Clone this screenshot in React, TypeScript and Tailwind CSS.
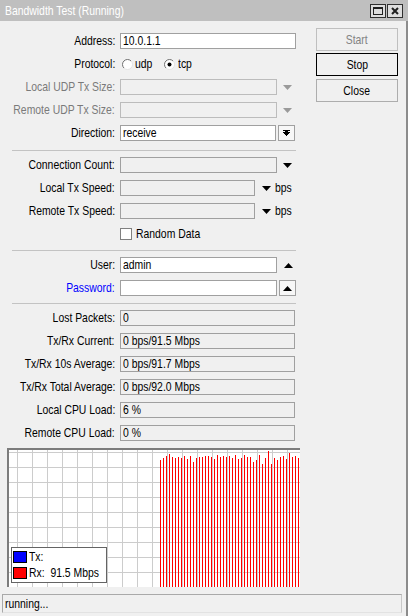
import type { ReactNode } from 'react';

const barTops = [
  10, 8, 6, 4, 7, 8, 7, 8, 6, 9, 6, 12, 8, 7, 7, 6, 6, 7, 9, 5, 7, 6, 7, 6, 8, 5, 9, 8, 5, 7, 7, 12, 10, 5, 14, 8, 1,
  14, 8, 10, 7, 6, 9, 3, 7, 6, 8,
];

// the reference font is a narrow, tall sans; squeeze Liberation Sans to match
function T({ children, origin = 'left' }: { children: ReactNode; origin?: 'left' | 'right' | 'center' }) {
  const o = origin === 'left' ? 'origin-left' : origin === 'right' ? 'origin-right' : 'origin-center';
  return <span className={`inline-block shrink-0 whitespace-pre scale-x-[0.8] ${o}`}>{children}</span>;
}

function Row({ label, labelClass = 'text-black', first, children }: { label: string; labelClass?: string; first?: boolean; children?: ReactNode }) {
  return (
    <div className={`flex h-[16px] items-center ${first ? '' : 'mt-[7px]'}`}>
      <div className={`flex w-[116px] shrink-0 justify-end pr-[1px] ${labelClass}`}>
        {label && <T origin="right">{label}</T>}
      </div>
      <div className="ml-[4px] flex h-[16px] items-center">{children}</div>
    </div>
  );
}

function Field({ value = '', width, tone = 'white' }: { value?: string; width: string; tone?: 'white' | 'gray' | 'disabled' }) {
  const cls =
    tone === 'white'
      ? 'bg-white border-[#a0a0a0]'
      : tone === 'gray'
        ? 'bg-[#f0f0f0] border-[#a0a0a0]'
        : 'bg-[#f0f0f0] border-[#bcbcbc]';
  return (
    <div className={`${width} flex h-[16px] shrink-0 items-center border pl-[2px] leading-[14px] ${cls}`}>
      {value && <T>{value}</T>}
    </div>
  );
}

function Arrow({ up, color = '#000000', className = '' }: { up?: boolean; color?: string; className?: string }) {
  return (
    <svg width="9" height="5" viewBox="0 0 9 5" className={`shrink-0 ${className}`}>
      <polygon points={up ? '0,5 9,5 4.5,0' : '0,0 9,0 4.5,5'} fill={color} />
    </svg>
  );
}

function Radio({ checked }: { checked?: boolean }) {
  return (
    <svg width="11" height="11" viewBox="0 0 11 11" className="shrink-0">
      <circle cx="5.5" cy="5.5" r="5" fill="#ffffff" />
      <path d="M1.96 9.04 A5 5 0 0 1 9.04 1.96" stroke="#707070" fill="none" />
      <path d="M9.04 1.96 A5 5 0 0 1 1.96 9.04" stroke="#e3e3e3" fill="none" />
      {checked && <circle cx="5.5" cy="5.5" r="2" fill="#000000" />}
    </svg>
  );
}

function Separator({ top }: { top: string }) {
  return <div className={`${top} mb-[6px] ml-[12px] h-px w-[284px] bg-[#c3c3c3]`} />;
}

function WinButton({ children, variant }: { children: ReactNode; variant: 'disabled' | 'default' | 'normal' }) {
  const cls =
    variant === 'disabled'
      ? 'border-[#bfbfbf] text-[#838383]'
      : variant === 'default'
        ? 'border-black text-black'
        : 'border-[#adadad] text-black';
  return (
    <div className={`flex h-[23px] w-[82px] items-center justify-center border bg-[#f0f0f0] ${cls}`}>
      <T origin="center">{children}</T>
    </div>
  );
}

function Graph() {
  const vLines = Array.from({ length: 19 }, (_, i) => 8 + i * 15);
  const hLines = Array.from({ length: 9 }, (_, i) => 2 + i * 15);
  return (
    <div className="relative ml-[7px] mt-[7px] h-[139px] w-[293px] border-l-2 border-t-2 border-[#7c7c7c] bg-white">
      <svg width="291" height="137" viewBox="0 0 291 137" shapeRendering="crispEdges" className="block">
        {vLines.map((x) => (
          <rect key={`v${x}`} x={x} y={0} width={1} height={137} fill="#cccccc" />
        ))}
        {hLines.map((y) => (
          <rect key={`h${y}`} x={0} y={y} width={291} height={1} fill="#cccccc" />
        ))}
        {barTops.map((t, i) => (
          <rect key={`b${i}`} x={151 + i * 3} y={t} width={1} height={137 - t} fill="#ff0000" />
        ))}
      </svg>
      <div className="absolute left-[2px] top-[97px] flex h-[36px] w-[96px] flex-col border border-[#646464] bg-white pl-[1px] pt-[3px]">
        <div className="flex h-[12px] items-center leading-[12px]">
          <div className="h-[12px] w-[14px] shrink-0 border border-black bg-[#0000ff]" />
          <span className="ml-[2px] flex">
            <T>Tx:</T>
          </span>
        </div>
        <div className="mt-[4px] flex h-[12px] items-center leading-[12px]">
          <div className="h-[12px] w-[14px] shrink-0 border border-black bg-[#ff0000]" />
          <span className="ml-[2px] flex">
            <T>Rx:  91.5 Mbps</T>
          </span>
        </div>
      </div>
    </div>
  );
}

export default function App() {
  return (
    <div className="relative h-[616px] w-[408px] overflow-hidden bg-[#f0f0f0] font-['Liberation_Sans',Arial,sans-serif] text-[13px] leading-[16px] text-black">
      {/* title bar */}
      <div className="flex h-[21px] items-center justify-between bg-[#bfbfbf] pl-[5px] pr-[5px]">
        <span className="flex text-white">
          <T>Bandwidth Test (Running)</T>
        </span>
        <div className="flex gap-[1px]">
          <div className="flex h-[14px] w-[16px] items-center justify-center border border-[#303030] bg-[#dedede]">
            <div className="h-[8px] w-[10px] border border-t-2 border-[#202020]" />
          </div>
          <div className="flex h-[14px] w-[16px] items-center justify-center border border-[#303030] bg-[#dedede]">
            <svg width="8" height="8" viewBox="0 0 8 8">
              <path d="M1 1 L7 7 M7 1 L1 7" stroke="#202020" strokeWidth="2" />
            </svg>
          </div>
        </div>
      </div>

      <div className="h-[595px] border-r-2 border-[#8c8c8c]">
        <div className="flex">
          {/* form */}
          <div className="w-[316px] pt-[12px]">
            <Row label="Address:" first>
              <Field value="10.0.1.1" width="w-[176px]" />
            </Row>
            <Row label="Protocol:">
              <div className="ml-[2px] flex items-center">
                <Radio />
                <span className="ml-[2px] flex w-[29px] shrink-0">
                  <T>udp</T>
                </span>
                <Radio checked />
                <span className="ml-[3px] flex">
                  <T>tcp</T>
                </span>
              </div>
            </Row>
            <Row label="Local UDP Tx Size:" labelClass="text-[#7a7a7a]">
              <Field width="w-[157px]" tone="disabled" />
              <Arrow color="#9a9a9a" className="ml-[6px]" />
            </Row>
            <Row label="Remote UDP Tx Size:" labelClass="text-[#7a7a7a]">
              <Field width="w-[157px]" tone="disabled" />
              <Arrow color="#9a9a9a" className="ml-[6px]" />
            </Row>
            <Row label="Direction:">
              <Field value="receive" width="w-[156px]" />
              <div className="ml-[2px] flex h-[16px] w-[17px] items-center justify-center border border-[#a0a0a0] bg-[#f7f7f7]">
                <svg width="7" height="7" viewBox="0 0 7 7" shapeRendering="crispEdges">
                  <rect x="0" y="0" width="7" height="1" fill="#000" />
                  <polygon points="0,2 7,2 3.5,6" fill="#000" />
                  <rect x="2" y="1" width="3" height="2" fill="#000" />
                </svg>
              </div>
            </Row>

            <Separator top="mt-[9px]" />

            <Row label="Connection Count:" first>
              <Field width="w-[157px]" tone="gray" />
              <Arrow className="ml-[6px]" />
            </Row>
            <Row label="Local Tx Speed:">
              <Field width="w-[135px]" tone="gray" />
              <Arrow className="ml-[7px]" />
              <span className="ml-[4px] flex">
                <T>bps</T>
              </span>
            </Row>
            <Row label="Remote Tx Speed:">
              <Field width="w-[135px]" tone="gray" />
              <Arrow className="ml-[7px]" />
              <span className="ml-[4px] flex">
                <T>bps</T>
              </span>
            </Row>
            <Row label="">
              <div className="h-[12px] w-[12px] shrink-0 border border-[#808080] bg-white" />
              <span className="ml-[4px] flex">
                <T>Random Data</T>
              </span>
            </Row>

            <Separator top="mt-[8px]" />

            <Row label="User:" first>
              <Field value="admin" width="w-[157px]" />
              <Arrow up className="ml-[7px]" />
            </Row>
            <Row label="Password:" labelClass="text-[#0000ff]">
              <Field width="w-[157px]" />
              <div className="ml-[2px] flex h-[16px] w-[17px] items-center justify-center border border-[#a0a0a0] bg-[#f7f7f7]">
                <Arrow up />
              </div>
            </Row>

            <Separator top="mt-[7px]" />

            <Row label="Lost Packets:" first>
              <Field value="0" width="w-[175px]" tone="gray" />
            </Row>
            <Row label="Tx/Rx Current:">
              <Field value="0 bps/91.5 Mbps" width="w-[175px]" tone="gray" />
            </Row>
            <Row label="Tx/Rx 10s Average:">
              <Field value="0 bps/91.7 Mbps" width="w-[175px]" tone="gray" />
            </Row>
            <Row label="Tx/Rx Total Average:">
              <Field value="0 bps/92.0 Mbps" width="w-[175px]" tone="gray" />
            </Row>
            <Row label="Local CPU Load:">
              <Field value="6 %" width="w-[175px]" tone="gray" />
            </Row>
            <Row label="Remote CPU Load:">
              <Field value="0 %" width="w-[175px]" tone="gray" />
            </Row>
          </div>

          {/* buttons */}
          <div className="flex flex-col pt-[7px]">
            <WinButton variant="disabled">Start</WinButton>
            <div className="mt-[2px]">
              <WinButton variant="default">Stop</WinButton>
            </div>
            <div className="mt-[3px]">
              <WinButton variant="normal">Close</WinButton>
            </div>
          </div>
        </div>

        <Graph />

        <div className="ml-[2px] mt-[7px] flex h-[19px] w-[400px] items-center border border-[#a9a9a9] border-b-[#e2e2e2] border-r-[#c8c8c8] pl-[2px]">
          <T>running...</T>
        </div>
      </div>
    </div>
  );
}
